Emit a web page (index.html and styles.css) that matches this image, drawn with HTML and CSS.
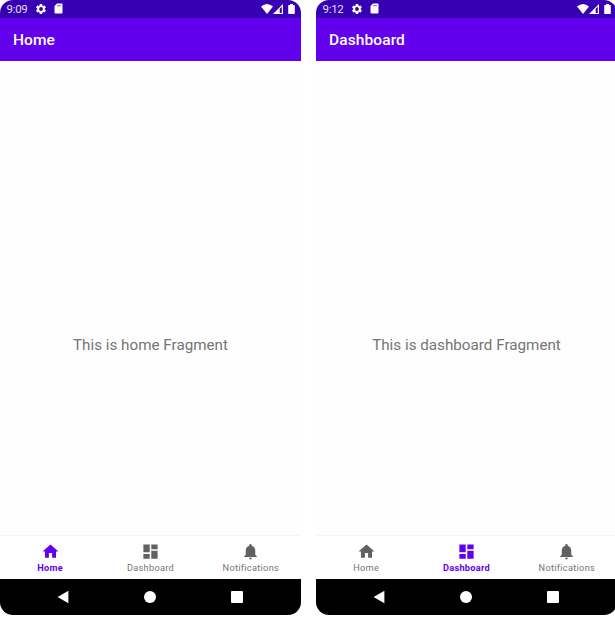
FILE: index.html
```
<!DOCTYPE html>
<html lang="en">
<head>
<meta charset="utf-8">
<title>Bottom navigation</title>
<link rel="stylesheet" href="styles.css">
</head>
<body>
<svg width="0" height="0" class="defs">
  <symbol id="gear" viewBox="0 0 24 24"><path fill-rule="evenodd" d="M19.4 13a7.500 7.500 0 0 0 0-2l2.100-1.600a.5.5 0 0 0 .1-.6l-2-3.500a.5.5 0 0 0-.6-.2l-2.500 1a7.300 7.300 0 0 0-1.700-1L14.400 2.400a.5.5 0 0 0-.5-.4h-4a.5.5 0 0 0-.5.4L9 5.100a7.700 7.700 0 0 0-1.700 1l-2.500-1a.5.5 0 0 0-.6.2l-2 3.500a.5.5 0 0 0 .1.600L4.500 11a8 8 0 0 0 0 2l-2.200 1.600a.5.5 0 0 0-.1.600l2 3.500c.1.200.4.300.6.200l2.500-1a7.300 7.300 0 0 0 1.700 1l.4 2.700c0 .2.200.4.500.4h4c.3 0 .5-.2.500-.4l.4-2.700a7.700 7.700 0 0 0 1.700-1l2.500 1c.2.100.5 0 .6-.2l2-3.500a.5.500 0 0 0-.1-.6zM12 15.800a3.800 3.800 0 1 1 0-7.600 3.800 3.800 0 0 1 0 7.600z"/></symbol>
  <symbol id="card" viewBox="0 0 9 11"><path d="M3 .5h4.500q1 0 1 1v8q0 1-1 1h-6q-1 0-1-1V3z"/><path class="slots" d="M3 2h4v1.300H3z"/></symbol>
  <symbol id="wifi" viewBox="0 0 12 10"><path d="M0 2.600Q6-2.400 12 2.600L6 10z"/></symbol>
  <symbol id="signal" viewBox="0 0 10 10"><path d="M0 10 10 0v10z"/><path class="gap" d="M6.700 4.800 8.800 2.700V9H6.700z"/></symbol>
  <symbol id="battery" viewBox="0 0 7 10"><path d="M2 0h3v1h1q.8 0 .8.800v7.400q0 .8-.8.800H1q-.8 0-.8-.8V1.800Q.2 1 1 1h1z"/></symbol>
  <symbol id="home" viewBox="0 0 24 24"><path d="M10 20v-6h4v6h5v-8h3L12 3 2 12h3v8z"/></symbol>
  <symbol id="dashboard" viewBox="0 0 24 24"><path d="M3 13h8V3H3zm0 8h8v-6H3zm10 0h8V11h-8zm0-18v6h8V3z"/></symbol>
  <symbol id="bell" viewBox="0 0 24 24"><path d="M12 22c1.100 0 2-.9 2-2h-4c0 1.100.89 2 2 2zm6-6v-5c0-3.070-1.640-5.640-4.500-6.320V4c0-.83-.67-1.500-1.500-1.500s-1.500.67-1.500 1.500v.68C7.630 5.360 6 7.920 6 11v5l-2 2v1h16v-1z"/></symbol>
  <symbol id="back" viewBox="0 0 12 14"><path d="M.6 7 11.400.7v12.600z"/></symbol>
</svg>
<main class="screens">
  <section class="phone">
    <div class="status">
      <span class="time">9:09</span>
      <svg class="gear"><use href="#gear"/></svg>
      <svg class="card"><use href="#card"/></svg>
      <svg class="wifi"><use href="#wifi"/></svg>
      <svg class="signal"><use href="#signal"/></svg>
      <svg class="battery"><use href="#battery"/></svg>
    </div>
    <header class="appbar">Home</header>
    <div class="content">This is home Fragment</div>
    <nav class="tabs">
      <div class="tab active"><svg class="i-home"><use href="#home"/></svg><span>Home</span></div>
      <div class="tab"><svg class="i-dash"><use href="#dashboard"/></svg><span>Dashboard</span></div>
      <div class="tab"><svg class="i-bell"><use href="#bell"/></svg><span>Notifications</span></div>
    </nav>
    <div class="system"><svg class="back"><use href="#back"/></svg><i class="circle"></i><i class="square"></i></div>
  </section>
  <section class="phone">
    <div class="status">
      <span class="time">9:12</span>
      <svg class="gear"><use href="#gear"/></svg>
      <svg class="card"><use href="#card"/></svg>
      <svg class="wifi"><use href="#wifi"/></svg>
      <svg class="signal"><use href="#signal"/></svg>
      <svg class="battery"><use href="#battery"/></svg>
    </div>
    <header class="appbar">Dashboard</header>
    <div class="content">This is dashboard Fragment</div>
    <nav class="tabs">
      <div class="tab"><svg class="i-home"><use href="#home"/></svg><span>Home</span></div>
      <div class="tab active"><svg class="i-dash"><use href="#dashboard"/></svg><span>Dashboard</span></div>
      <div class="tab"><svg class="i-bell"><use href="#bell"/></svg><span>Notifications</span></div>
    </nav>
    <div class="system"><svg class="back"><use href="#back"/></svg><i class="circle"></i><i class="square"></i></div>
  </section>
</main>
</body>
</html>
```
FILE: styles.css
```
* { box-sizing: border-box; }
body {
  margin: 0;
  background: #fff;
  font-family: Roboto, sans-serif;
  overflow: hidden;
}
svg { display: block; fill: currentColor; flex: none; }
.defs { position: absolute; }
.screens { display: flex; gap: 15px; }
.phone {
  flex: none;
  width: 301px;
  height: 615px;
  display: flex;
  flex-direction: column;
  overflow: hidden;
  border-radius: 13px;
  background: #fefefe;
}
.status {
  height: 17.5px;
  display: flex;
  align-items: center;
  padding: 0 6px 0 6.500px;
  background: #3700b3;
  color: #fff;
}
.time { width: 29px; font-size: 11.500px; line-height: 16px; padding-top: 1px; letter-spacing: -.3px; color: #e6dcf8; }
.gear { width: 12px; height: 12px; margin-left: -.5px; }
.card { width: 9px; height: 11px; margin-left: 6.500px; }
.slots { fill: #9a7fd8; }
.wifi { width: 12px; height: 10px; margin-left: auto; }
.signal { width: 10px; height: 10px; margin-left: .5px; }
.gap { fill: #3700b3; }
.battery { width: 7px; height: 10px; margin-left: 5px; }
.appbar {
  height: 43px;
  padding-left: 13px;
  background: #6200ee;
  color: #fff;
  font-size: 15.500px;
  font-weight: 500;
  line-height: 45px;
  letter-spacing: .1px;
}
.content {
  flex: 1;
  padding-top: 274.500px;
  text-align: center;
  font-size: 15.200px;
  line-height: 20px;
  letter-spacing: .01px;
  color: #757575;
}
.tabs {
  height: 44px;
  display: flex;
  border-top: 1px solid #f5f5f5;
  background: #fff;
  color: #616161;
}
.tab {
  flex: 1;
  display: flex;
  flex-direction: column;
  align-items: center;
}
.tab svg { height: 19px; margin-top: 5.500px; }
.tab .i-home { width: 19px; }
.tab .i-dash { width: 19px; }
.i-bell { width: 19px; }
.tab span { font-size: 9.200px; line-height: 12px; letter-spacing: .3px; color: #757575; margin-top: 1px; }
.active { color: #6200ee; }
.tab.active span { color: #6200ee; font-weight: 700; letter-spacing: .3px; }
.system {
  height: 36px;
  display: flex;
  align-items: center;
  padding-left: 57px;
  background: #000;
  color: #fff;
}
.back { width: 12px; height: 14px; }
.circle { width: 12px; height: 12px; border-radius: 50%; background: #fff; margin-left: 75px; }
.square { width: 12px; height: 12px; border-radius: 1px; background: #fff; margin-left: 74.500px; }
```
